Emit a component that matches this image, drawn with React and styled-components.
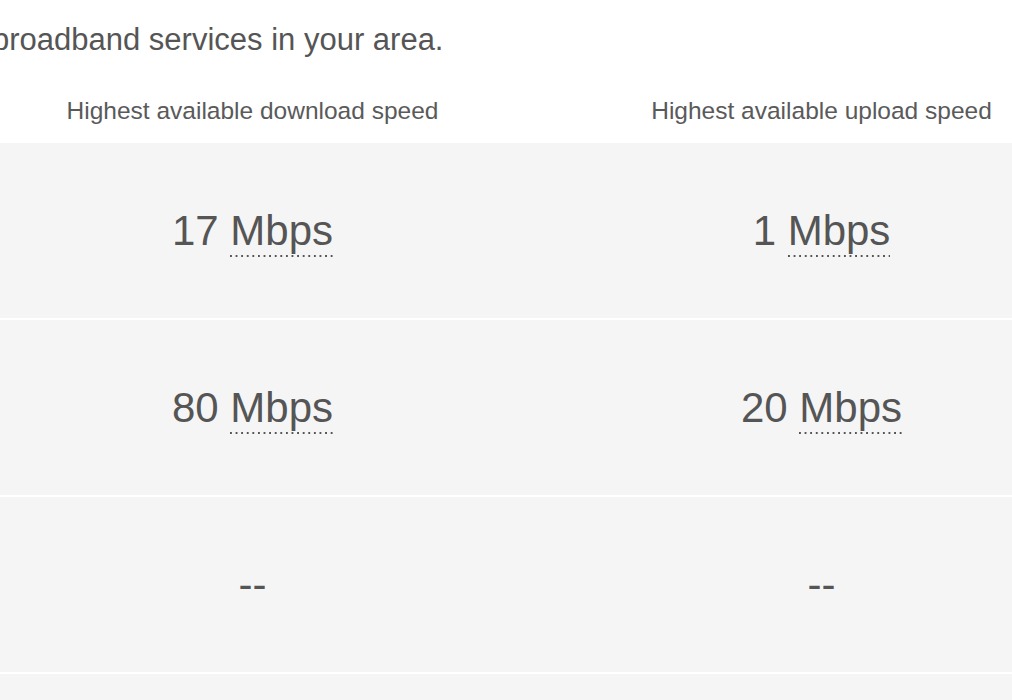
import React from "react";
import styled, { createGlobalStyle } from "styled-components";

const Global = createGlobalStyle`
  html, body {
    margin: 0;
    padding: 0;
    background: #ffffff;
    overflow: hidden;
  }
  body {
    font-family: "Liberation Sans", Arial, sans-serif;
    color: #555555;
  }
`;

const Page = styled.div`
  width: 1012px;
  height: 700px;
  overflow: hidden;
  background: #ffffff;
`;

const Intro = styled.p`
  margin: 0 0 0 -8px;
  padding-top: 22px;
  font-size: 31px;
  line-height: 36px;
  color: #555555;
  white-space: nowrap;
`;

const Table = styled.div`
  display: grid;
  grid-template-columns: 569px 569px;
  row-gap: 2px;
  margin-left: -32px;
  margin-top: 39px;
  background: #ffffff;
`;

const HeadCell = styled.div`
  font-size: 24.5px;
  line-height: 28px;
  color: #5a5a5a;
  text-align: center;
  padding-bottom: 16px;
  background: #ffffff;
`;

const Cell = styled.div`
  height: 175px;
  background: #f5f5f5;
  display: flex;
  align-items: center;
  justify-content: center;
  font-size: 42px;
  line-height: 48px;
  color: #555555;
`;

const Value = styled.span`
  display: inline-block;
`;

const Unit = styled.abbr`
  text-decoration: none;
  padding-bottom: 3px;
  background-image: linear-gradient(to right, #555555 2px, transparent 2px);
  background-size: 5.6px 2px;
  background-repeat: repeat-x;
  background-position: 0 100%;
`;

const rows = [
  { down: "17", up: "1" },
  { down: "80", up: "20" },
  { down: "--", up: "--" },
  { down: "", up: "" },
];

function Speed({ value }) {
  if (value === "") return <Cell />;
  if (value === "--") return <Cell><Value>--</Value></Cell>;
  return (
    <Cell>
      <Value>
        {value} <Unit title="Megabits per second">Mbps</Unit>
      </Value>
    </Cell>
  );
}

export default function App() {
  return (
    <Page>
      <Global />
      <Intro>broadband services in your area.</Intro>
      <Table>
        <HeadCell>Highest available download speed</HeadCell>
        <HeadCell>Highest available upload speed</HeadCell>
        {rows.map((r, i) => (
          <React.Fragment key={i}>
            <Speed value={r.down} />
            <Speed value={r.up} />
          </React.Fragment>
        ))}
      </Table>
    </Page>
  );
}
